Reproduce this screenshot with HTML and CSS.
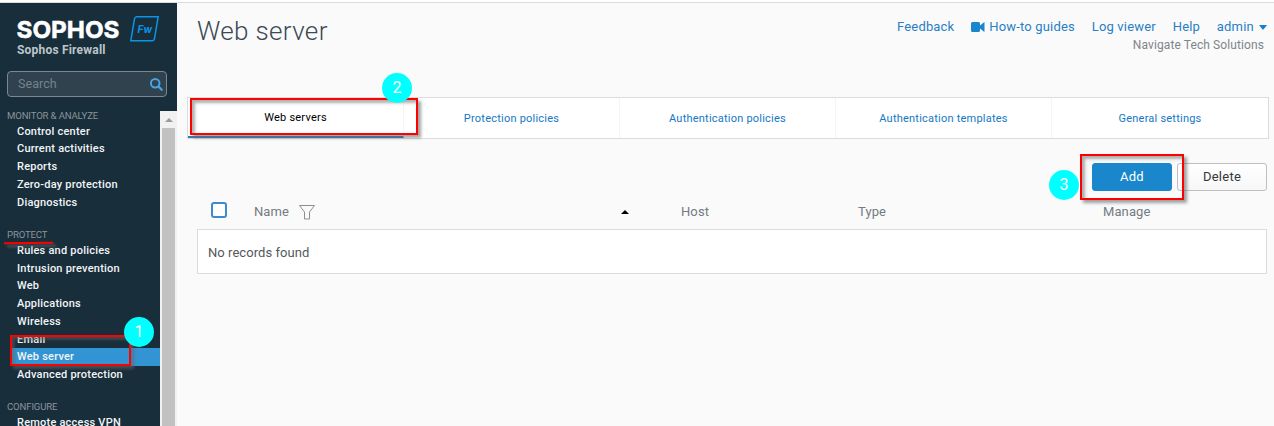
FILE: index.html
```html
<!DOCTYPE html>
<html lang="en">
<head>
<meta charset="utf-8">
<title>Web server</title>
<link rel="stylesheet" href="styles.css">
</head>
<body>
<div class="app">
  <aside class="sidebar">
    <div class="brand">
      <svg class="logo" width="145" height="30" viewBox="0 0 145 30">
        <text class="wordmark" x="0.500" y="22.700" textLength="103" lengthAdjust="spacingAndGlyphs">SOPHOS</text>
        <path d="M120.800 1.700H142.200L138.500 23.500Q138.200 25.700 136 25.700H114.800L118.500 3.800Q118.900 1.700 120.800 1.700Z" fill="none" stroke="#0a94ea" stroke-width="1.500"/>
        <text class="fw" x="121.500" y="18" textLength="14.500" lengthAdjust="spacingAndGlyphs">Fw</text>
      </svg>
      <div class="product">Sophos Firewall</div>
    </div>
    <div class="search">
      <span>Search</span>
      <svg width="14" height="14" viewBox="0 0 14 14"><circle cx="6.200" cy="6.200" r="4.300" fill="none" stroke="#4aa3e2" stroke-width="2"/><path d="M9.500 9.500l3.200 3.200" stroke="#4aa3e2" stroke-width="2.300" stroke-linecap="round"/></svg>
    </div>
    <div class="menu">
      <nav class="nav">
        <section><h2>MONITOR &amp; ANALYZE</h2><a>Control center</a><a>Current activities</a><a>Reports</a><a>Zero-day protection</a><a>Diagnostics</a></section>
        <section><h2>PROTECT</h2><a>Rules and policies</a><a>Intrusion prevention</a><a>Web</a><a>Applications</a><a>Wireless</a><a>Email</a><a class="current">Web server</a><a>Advanced protection</a></section>
        <section><h2>CONFIGURE</h2><a>Remote access VPN</a></section>
      </nav>
      <div class="scrollbar"><i class="arrow"></i><i class="thumb"></i></div>
    </div>
  </aside>
  <main class="main">
    <header class="top">
      <h1>Web server</h1>
      <div class="tools">
        <div class="links">
          <a>Feedback</a>
          <a class="video"><svg width="14" height="10" viewBox="0 0 14 10"><path d="M1.500 0H7.500Q9 0 9 1.500V3.500L13 .3H13.500V9.700H13L9 6.500V8.500Q9 10 7.500 10H1.500Q0 10 0 8.500V1.500Q0 0 1.500 0Z" fill="#1a86cc"/></svg>How-to guides</a>
          <a>Log viewer</a>
          <a>Help</a>
          <a class="user">admin<svg width="8" height="5" viewBox="0 0 8 5"><path d="M0 0H8L4.500 4.500H3.500Z" fill="#1a7fcb"/></svg></a>
        </div>
        <div class="org">Navigate Tech Solutions</div>
      </div>
    </header>
    <div class="tabs"><a class="active">Web servers</a><a>Protection policies</a><a>Authentication policies</a><a>Authentication templates</a><a>General settings</a></div>
    <div class="actions"><button class="btn primary">Add</button><button class="btn">Delete</button></div>
    <div class="thead">
      <span class="check"></span>
      <span class="name">Name<svg width="16" height="15" viewBox="0 0 16 15"><path d="M.5 .5H15.500L10.500 7V14H5.500V7Z" fill="none" stroke="#8b8f94"/></svg></span>
      <svg class="sort" width="8" height="4" viewBox="0 0 8 4"><path d="M0 4L4 0L8 4Z"/></svg>
      <span>Host</span><span>Type</span><span>Manage</span>
    </div>
    <div class="empty">No records found</div>
  </main>
  <i class="mark underline"></i>
  <i class="mark box box-server"></i><b class="mark dot dot-one">1</b>
  <i class="mark box box-tab"></i><b class="mark dot dot-two">2</b>
  <i class="mark box box-add"></i><b class="mark dot dot-three">3</b>
</div>
</body>
</html>
```
FILE: styles.css
```css
* { box-sizing: border-box; }
body { margin: 0; background: #fafafa; font-family: Roboto, sans-serif; overflow: hidden; }
h1, h2 { margin: 0; font-weight: 400; }
svg { display: block; flex: none; }
.app { position: relative; display: flex; height: 424px; margin-top: 2px; }
.app::before { content: ""; position: absolute; top: 0; left: 0; right: 0; height: 1px; background: #dcdcdd; }
.app::after { content: ""; position: absolute; top: -2px; left: 0; right: 0; height: 2px; background: #fff; }
.sidebar { width: 177px; margin-top: 1px; background: #182e3b; display: flex; flex-direction: column; }
.brand { flex: none; height: 68px; padding: 12px 0 0 16px; }
.wordmark { font: 700 23.500px Inter, sans-serif; fill: #fff; stroke: #fff; stroke-width: .5px; }
.fw { font: italic 700 10.500px Inter, sans-serif; fill: #0a94ea; }
.product { margin-top: -3px; font-size: 12px; line-height: 16px; font-weight: 700; letter-spacing: .2px; color: #bdc5ca; padding-left: 1px; }
.search { flex: none; width: 160px; height: 26px; margin-left: 7px; padding: 0 3px 0 10px; border: 1px solid #7b8890; border-radius: 4px; background: #2f424e; display: flex; align-items: center; justify-content: space-between; font-size: 12.500px; line-height: 22px; letter-spacing: .05px; color: #76838b; }
.search span { padding-bottom: 1px; }
.menu { flex: none; display: flex; height: 318px; margin-top: 11px; overflow: hidden; }
.nav { width: 160px; flex: none; }
.nav section { margin-bottom: 16.500px; }
.nav section:last-child { margin-bottom: 0; }
.nav h2 { height: 14px; line-height: 14px; padding-left: 7px; font-size: 9.600px; letter-spacing: -.15px; color: #8b949a; }
.nav section:first-child h2 { height: 14.500px; line-height: 15px; }
.nav a { display: block; height: 17.750px; line-height: 17.750px; padding-left: 17px; font-size: 11px; font-weight: 500; letter-spacing: .22px; color: #f2f5f6; white-space: nowrap; }
.nav a.current { background: #3394d4; margin-left: 12px; padding-left: 5px; }
.scrollbar { width: 17px; margin-top: 3px; background: #f1f1f1; display: flex; flex-direction: column; align-items: center; }
.arrow { margin: 7px 0 6px; border: 4px solid transparent; border-top: 0; border-bottom-color: #9b9b9b; }
.thumb { width: 13px; flex: 1; background: #c1c1c1; }
.main { width: 1097px; padding: 1px 5px 0 10px; color: #80858b; }
.top { height: 94px; display: flex; justify-content: space-between; padding-left: 10px; }
h1 { margin-top: 11px; font-size: 26px; font-weight: 300; line-height: 34px; letter-spacing: .35px; color: #3b4956; }
.tools { width: 372px; padding-top: 15px; font-size: 13px; color: #80858b; }
.links { display: flex; height: 18px; line-height: 18px; gap: 16.800px; color: #287fc6; letter-spacing: .18px; white-space: nowrap; }
.video, .user { display: flex; align-items: center; gap: 4px; }
.user { gap: 5px; }
.org { padding-right: 5px; font-size: 12px; line-height: 18px; text-align: right; letter-spacing: .1px; }
.tabs { display: grid; grid-template-columns: repeat(5, 216px); width: 1082px; height: 42px; border: 1px solid #dcdcdc; background: #fff; }
.tabs a { display: flex; align-items: center; justify-content: center; border-right: 1px solid #f5f5f5; font-size: 11px; font-weight: 400; letter-spacing: .22px; color: #1578c4; }
.tabs a:last-child { border: 0; }
.tabs .active { color: #000; border-bottom: 2px solid #287fbe; }
.actions { display: flex; justify-content: flex-end; gap: 5px; margin: 24px 2px 0; }
.btn { width: 90px; height: 28px; padding: 0 0 2px; border: 1px solid #bebfc1; border-radius: 3px; background: linear-gradient(#fff, #f7f7f7); font: 400 13px Roboto, sans-serif; letter-spacing: .25px; color: #34383c; }
.primary { width: 80px; background: #1a86cc; border-color: #1a86cc; color: #fff; }
.thead { display: grid; grid-template-columns: 57px 367px 60px 177px 245px 1fr; align-items: center; height: 38px; padding: 2px 0 0 10px; font-size: 13px; font-weight: 400; letter-spacing: .1px; color: #747b83; }
.check { width: 16px; height: 16px; margin: 0 0 3px 14px; border: 2px solid #4189cd; border-radius: 3px; background: #fff; }
.name { display: flex; align-items: center; gap: 10px; }
.name svg { margin-top: 2px; }
.sort { margin-top: 2px; }
.empty { height: 45px; margin: 0 2px 0 10px; padding-left: 10px; border: 1px solid #dcdcdc; background: #fff; line-height: 45px; font-size: 13px; letter-spacing: .05px; color: #54585c; }
.mark { position: absolute; }
.box { border: 2px solid #f00; box-shadow: 3px 3px 3px rgba(100,100,100,.6), inset 3px 3px 3px rgba(100,100,100,.5); }
.box-server { left: 10px; top: 333px; width: 121px; height: 31px; }
.box-tab { left: 190px; top: 96px; width: 228px; height: 37px; }
.box-add { left: 1080px; top: 152px; width: 104px; height: 46px; }
.underline { left: 4px; top: 240px; width: 49px; height: 2px; background: #f00; transform: rotate(-.8deg); box-shadow: 3px 3px 3px rgba(120,120,120,.65); }
.dot { width: 30px; height: 30px; border-radius: 50%; background: #0ff; color: #fff; font: 400 16px/30px Roboto, sans-serif; text-align: center; }
.dot-one { left: 124px; top: 315px; }
.dot-two { left: 382px; top: 71px; }
.dot-three { left: 1049px; top: 168px; }
```
